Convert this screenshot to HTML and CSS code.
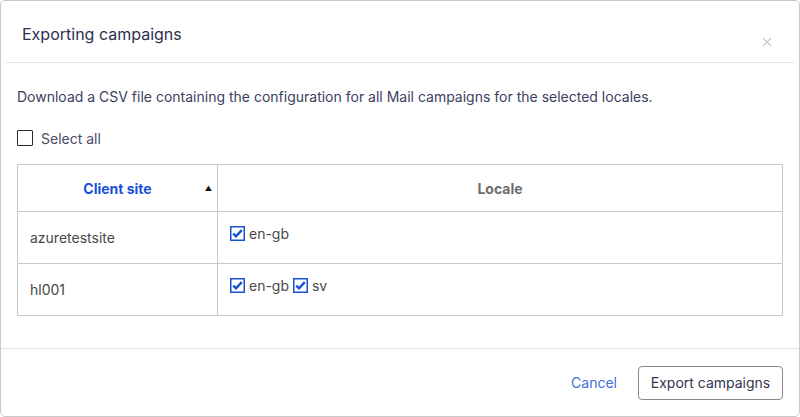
FILE: index.html
```html
<!DOCTYPE html>
<html>
<head>
<meta charset="utf-8">
<link rel="stylesheet" href="styles.css">
</head>
<body>
<div class="dialog">
  <div class="header">
    <h1 class="title">Exporting campaigns</h1>
    <span class="close">
      <svg width="10" height="10" viewBox="0 0 10 10"><path d="M1 1L9 9M9 1L1 9" stroke="#c8c8c8" stroke-width="1.2" fill="none"/></svg>
    </span>
  </div>
  <div class="body">
    <p class="desc">Download a CSV file containing the configuration for all Mail campaigns for the selected locales.</p>
    <label class="select-all"><span class="box"></span><span>Select all</span></label>
    <table class="grid">
      <thead>
        <tr>
          <th class="col-site"><span class="sort-label">Client site</span><span class="sort">&#9650;</span></th>
          <th class="col-locale">Locale</th>
        </tr>
      </thead>
      <tbody>
        <tr>
          <td class="site">azuretestsite</td>
          <td class="locales">
            <span class="loc"><svg class="chk" width="15" height="15" viewBox="0 0 15 15"><rect x="0.75" y="0.75" width="13.5" height="13.5" fill="#fff" stroke="#1750d0" stroke-width="1.5"/><path d="M3.2 7.6L6 10.3L11.8 4.2" stroke="#1750d0" stroke-width="2.4" fill="none"/></svg>en-gb</span>
          </td>
        </tr>
        <tr>
          <td class="site">hl001</td>
          <td class="locales">
            <span class="loc"><svg class="chk" width="15" height="15" viewBox="0 0 15 15"><rect x="0.75" y="0.75" width="13.5" height="13.5" fill="#fff" stroke="#1750d0" stroke-width="1.5"/><path d="M3.2 7.6L6 10.3L11.8 4.2" stroke="#1750d0" stroke-width="2.4" fill="none"/></svg>en-gb</span>
            <span class="loc"><svg class="chk" width="15" height="15" viewBox="0 0 15 15"><rect x="0.75" y="0.75" width="13.5" height="13.5" fill="#fff" stroke="#1750d0" stroke-width="1.5"/><path d="M3.2 7.6L6 10.3L11.8 4.2" stroke="#1750d0" stroke-width="2.4" fill="none"/></svg>sv</span>
          </td>
        </tr>
      </tbody>
    </table>
  </div>
  <div class="footer">
    <button class="btn-link">Cancel</button>
    <button class="btn">Export campaigns</button>
  </div>
</div>
</body>
</html>
```
FILE: styles.css
```css
* { box-sizing: border-box; }
html, body { margin: 0; padding: 0; background: #fff; }
body { font-family: Inter, "Noto Sans", sans-serif; color: #3b3e5a; }

.dialog {
  width: 800px;
  height: 417px;
  border: 1px solid #c9c9c9;
  border-radius: 5px;
  display: flex;
  flex-direction: column;
}

.header {
  margin: 0 5px;
  height: 62px;
  border-bottom: 1px solid #e2e2e2;
  display: flex;
  justify-content: space-between;
  align-items: flex-start;
  padding: 23px 22px 0 16px;
}
.title {
  margin: 0;
  font-size: 16px;
  font-weight: 400;
  line-height: 21px;
  color: #2c2f4f;
}
.close {
  margin-top: 13px;
  width: 10px;
  height: 10px;
  display: flex;
}

.body {
  padding: 0 16px;
  flex: 1;
}
.desc {
  margin: 25px 0 0;
  font-size: 14px;
  line-height: 18px;
  color: #3d4060;
}
.select-all {
  margin-top: 24px;
  display: flex;
  align-items: center;
  gap: 8px;
  font-size: 14px;
  color: #4a4c66;
  height: 16px;
}
.box {
  width: 16px;
  height: 16px;
  border: 1.5px solid #2b2b33;
  border-radius: 1px;
}

.grid {
  margin-top: 18px;
  width: 766px;
  border-collapse: collapse;
  font-size: 14px;
}
.grid th, .grid td {
  border: 1px solid #c9c9c9;
}
.grid th {
  height: 47px;
  font-weight: 700;
  font-size: 14px;
}
.col-site {
  width: 200px;
  position: relative;
  color: #1a4fd6;
}
.sort {
  position: absolute;
  right: 5px;
  top: 19px;
  font-size: 7px;
  color: #111;
}
.col-locale { color: #6d6d6d; }
.grid td { height: 52px; color: #484848; }
.site { padding: 0 12px; }
.locales { padding: 0 12px; }
.loc {
  display: inline-flex;
  align-items: center;
  gap: 4px;
  margin-right: 0;
  position: relative;
  top: -3px;
}

.footer {
  height: 68px;
  border-top: 1px solid #e2e2e2;
  display: flex;
  justify-content: flex-end;
  align-items: center;
  padding: 0 16px 0 0;
  gap: 21px;
}
.btn-link {
  background: none;
  border: none;
  font-family: inherit;
  font-size: 14px;
  color: #3f6fd9;
  padding: 0;
  cursor: pointer;
}
.btn {
  height: 34px;
  width: 145px;
  border: 1px solid #8a8a8a;
  border-radius: 4px;
  background: #fff;
  font-family: inherit;
  font-size: 14px;
  color: #33364f;
  padding: 0;
}
```
